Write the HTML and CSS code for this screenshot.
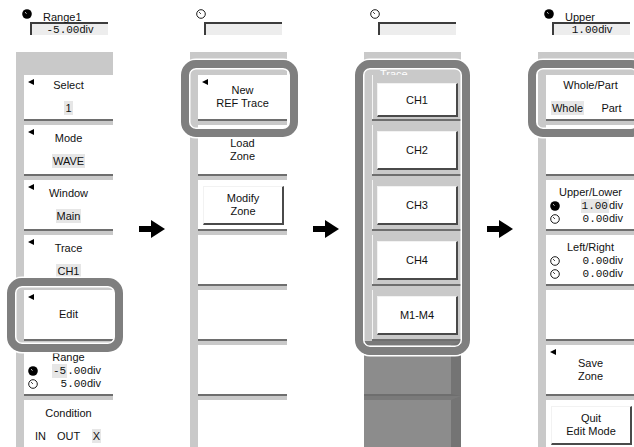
FILE: index.html
```html
<!DOCTYPE html>
<html lang="en">
<head>
  <meta charset="UTF-8">
  <meta name="viewport" content="width=device-width, initial-scale=1.0">
  <title>REF Trace zone edit</title>
  <link rel="stylesheet" href="styles.css">
</head>
<body>
  <div class="page">

    <!-- step 1 -->
    <div class="col">
      <div class="head">
        <div class="head-top">
          <svg class="knob" viewBox="0 0 10 10"><circle cx="5" cy="5" r="4.8" fill="#000"/><path d="M3 3.2 L4.6 4.6" stroke="#fff" stroke-width="0.8"/></svg>
          <span class="head-label">Range1</span>
        </div>
        <div class="head-box"><span class="num">-5.00</span>div</div>
      </div>
      <div class="menu">
        <div class="band"></div>
        <div class="key first">
          <span class="tri"></span>
          <div class="name">Select</div>
          <div class="val"><span class="sel">1</span></div>
        </div>
        <div class="key">
          <span class="tri"></span>
          <div class="name">Mode</div>
          <div class="val"><span class="sel">WAVE</span></div>
        </div>
        <div class="key">
          <span class="tri"></span>
          <div class="name">Window</div>
          <div class="val"><span class="sel">Main</span></div>
        </div>
        <div class="key">
          <span class="tri"></span>
          <div class="name">Trace</div>
          <div class="val"><span class="sel">CH1</span></div>
        </div>
        <div class="key single">
          <span class="tri"></span>
          <div class="name">Edit</div>
        </div>
        <div class="key">
          <div class="title">Range</div>
          <div class="row">
            <svg class="knob" viewBox="0 0 10 10"><circle cx="5" cy="5" r="4.8" fill="#000"/><path d="M3 3.2 L4.6 4.6" stroke="#fff" stroke-width="0.8"/></svg>
            <span class="amount"><span class="num"><span class="sel">-5</span>.00</span>div</span>
          </div>
          <div class="row">
            <svg class="knob" viewBox="0 0 10 10"><circle cx="5" cy="5" r="4.3" fill="#fff" stroke="#000" stroke-width="0.9"/><path d="M3.2 3.2 L4.8 4.8" stroke="#000" stroke-width="0.9"/></svg>
            <span class="amount"><span class="num">5.00</span>div</span>
          </div>
        </div>
        <div class="key">
          <div class="name">Condition</div>
          <div class="choice three">
            <span>IN</span><span>OUT</span><span><span class="sel">X</span></span>
          </div>
        </div>
      </div>
    </div>

    <div class="arrow"><svg viewBox="0 0 26 18"><rect x="0" y="6" width="14" height="6" fill="#000"/><polygon points="12,0 26,9 12,18" fill="#000"/></svg></div>

    <!-- step 2 -->
    <div class="col">
      <div class="head">
        <div class="head-top">
          <svg class="knob" viewBox="0 0 10 10"><circle cx="5" cy="5" r="4.3" fill="#fff" stroke="#000" stroke-width="0.9"/><path d="M3.2 3.2 L4.8 4.8" stroke="#000" stroke-width="0.9"/></svg>
          <span class="head-label"></span>
        </div>
        <div class="head-box"></div>
      </div>
      <div class="menu">
        <div class="band"></div>
        <div class="key first double">
          <span class="tri"></span>
          <div class="name">New</div>
          <div class="name">REF Trace</div>
        </div>
        <div class="key double">
          <div class="name">Load</div>
          <div class="name">Zone</div>
        </div>
        <div class="key pad">
          <div class="btn double">
            <div class="name">Modify</div>
            <div class="name">Zone</div>
          </div>
        </div>
        <div class="key"></div>
        <div class="key"></div>
        <div class="key"></div>
        <div class="key"></div>
      </div>
    </div>

    <div class="arrow"><svg viewBox="0 0 26 18"><rect x="0" y="6" width="14" height="6" fill="#000"/><polygon points="12,0 26,9 12,18" fill="#000"/></svg></div>

    <!-- step 3 -->
    <div class="col">
      <div class="head">
        <div class="head-top">
          <svg class="knob" viewBox="0 0 10 10"><circle cx="5" cy="5" r="4.3" fill="#fff" stroke="#000" stroke-width="0.9"/><path d="M3.2 3.2 L4.8 4.8" stroke="#000" stroke-width="0.9"/></svg>
          <span class="head-label"></span>
        </div>
        <div class="head-box"></div>
      </div>
      <div class="menu gray">
        <div class="band"><span class="legend">Trace</span></div>
        <div class="key first pad"><div class="btn">CH1</div></div>
        <div class="key pad"><div class="btn">CH2</div></div>
        <div class="key pad"><div class="btn">CH3</div></div>
        <div class="key pad"><div class="btn">CH4</div></div>
        <div class="key pad"><div class="btn">M1-M4</div></div>
        <div class="key off"></div>
        <div class="key off"></div>
      </div>
    </div>

    <div class="arrow"><svg viewBox="0 0 26 18"><rect x="0" y="6" width="14" height="6" fill="#000"/><polygon points="12,0 26,9 12,18" fill="#000"/></svg></div>

    <!-- step 4 -->
    <div class="col">
      <div class="head">
        <div class="head-top">
          <svg class="knob" viewBox="0 0 10 10"><circle cx="5" cy="5" r="4.8" fill="#000"/><path d="M3 3.2 L4.6 4.6" stroke="#fff" stroke-width="0.8"/></svg>
          <span class="head-label">Upper</span>
        </div>
        <div class="head-box"><span class="num">1.00</span>div</div>
      </div>
      <div class="menu">
        <div class="band"></div>
        <div class="key first">
          <div class="name">Whole/Part</div>
          <div class="choice two">
            <span><span class="sel">Whole</span></span><span>Part</span>
          </div>
        </div>
        <div class="key"></div>
        <div class="key">
          <div class="title">Upper/Lower</div>
          <div class="row">
            <svg class="knob" viewBox="0 0 10 10"><circle cx="5" cy="5" r="4.8" fill="#000"/><path d="M3 3.2 L4.6 4.6" stroke="#fff" stroke-width="0.8"/></svg>
            <span class="amount"><span class="num"><span class="sel">1.00</span></span>div</span>
          </div>
          <div class="row">
            <svg class="knob" viewBox="0 0 10 10"><circle cx="5" cy="5" r="4.3" fill="#fff" stroke="#000" stroke-width="0.9"/><path d="M3.2 3.2 L4.8 4.8" stroke="#000" stroke-width="0.9"/></svg>
            <span class="amount"><span class="num">0.00</span>div</span>
          </div>
        </div>
        <div class="key">
          <div class="title">Left/Right</div>
          <div class="row">
            <svg class="knob" viewBox="0 0 10 10"><circle cx="5" cy="5" r="4.3" fill="#fff" stroke="#000" stroke-width="0.9"/><path d="M3.2 3.2 L4.8 4.8" stroke="#000" stroke-width="0.9"/></svg>
            <span class="amount"><span class="num">0.00</span>div</span>
          </div>
          <div class="row">
            <svg class="knob" viewBox="0 0 10 10"><circle cx="5" cy="5" r="4.3" fill="#fff" stroke="#000" stroke-width="0.9"/><path d="M3.2 3.2 L4.8 4.8" stroke="#000" stroke-width="0.9"/></svg>
            <span class="amount"><span class="num">0.00</span>div</span>
          </div>
        </div>
        <div class="key"></div>
        <div class="key double">
          <span class="tri"></span>
          <div class="name">Save</div>
          <div class="name">Zone</div>
        </div>
        <div class="key pad">
          <div class="btn double">
            <div class="name">Quit</div>
            <div class="name">Edit Mode</div>
          </div>
        </div>
      </div>
    </div>

    <!-- callout rings -->
    <div class="ring r1"></div>
    <div class="ring r2"></div>
    <div class="ring r3"></div>
    <div class="ring r4"></div>
  </div>
</body>
</html>
```

FILE: styles.css
```css
body {
  margin: 0;
  padding: 0;
  background: #fff;
  font-family: "Liberation Sans", Arial, sans-serif;
  font-size: 11px;
  color: #111;
  overflow: hidden;
}
.page {
  position: relative;
  display: flex;
  align-items: flex-start;
  padding-left: 16px;
  width: 634px;
  height: 447px;
  box-sizing: border-box;
  overflow: hidden;
}
.col {
  width: 97px;
  flex: none;
}
.arrow {
  width: 77px;
  flex: none;
  display: flex;
  justify-content: center;
  padding-top: 220px;
}
.arrow svg {
  width: 26px;
  height: 18px;
}

/* header with jog knob and value box */
.head {
  height: 52px;
  padding: 9px 0 0 6px;
  box-sizing: border-box;
}
.head-top {
  display: flex;
  align-items: flex-start;
  height: 13px;
}
.knob {
  width: 10px;
  height: 10px;
  flex: none;
}
.head-label {
  margin: 3px 0 0 11px;
  line-height: 10px;
}
.head-box {
  margin-left: 8px;
  width: 78px;
  height: 13px;
  box-sizing: border-box;
  border-top: 2px solid #3c3c3c;
  border-left: 2px solid #3c3c3c;
  background: #ededed;
  text-align: center;
  line-height: 11px;
}
.num {
  font-family: "Liberation Mono", monospace;
  font-size: 11px;
}

/* soft key menu */
.menu {
  border-left: 8px solid #c9c9c9;
}
.band {
  height: 23px;
  margin-left: -8px;
  background: #c9c9c9;
}
.key {
  position: relative;
  height: 49px;
  background: #fff;
  border-bottom: 2px solid #6e6e6e;
  display: flex;
  flex-direction: column;
  justify-content: center;
  align-items: center;
  text-align: center;
}
.key + .key {
  border-top: 4px solid #c9c9c9;
}
.key.first {
  height: 44px;
}
.key:last-child {
  border-bottom: none;
}
.tri {
  position: absolute;
  left: 4px;
  top: 4px;
  width: 0;
  height: 0;
  border-top: 3.5px solid transparent;
  border-bottom: 3.5px solid transparent;
  border-right: 6px solid #000;
}
.name {
  line-height: 13px;
}
.val {
  line-height: 13px;
  margin-top: 10px;
}
.sel {
  background: #e6e6e6;
  padding: 1px 1px;
}
.title {
  line-height: 13px;
  margin-top: 2px;
}
.row {
  display: flex;
  align-items: center;
  justify-content: space-between;
  width: 100%;
  box-sizing: border-box;
  padding: 0 12px 0 4px;
  height: 13px;
}
.choice {
  display: grid;
  margin-top: 10px;
  line-height: 13px;
}
.choice.three {
  grid-template-columns: 28px 28px 28px;
}
.choice.two {
  grid-template-columns: 44px 44px;
  margin-right: 2px;
}

/* raised buttons */
.key.pad {
  height: 43px;
  justify-content: flex-start;
  align-items: stretch;
  padding: 6px 3px 0 5px;
}
.btn {
  height: 36px;
  background: #fff;
  border-top: 1px solid #f2f2f2;
  border-left: 1px solid #f2f2f2;
  border-right: 2px solid #4a4a4a;
  border-bottom: 2px solid #4a4a4a;
  display: flex;
  flex-direction: column;
  justify-content: center;
  align-items: center;
}

/* step 3: trace group */
.menu.gray .band,
.menu.gray .key {
  background: #c9c9c9;
}
.menu.gray .key.pad {
  box-shadow: inset 1px 0 0 #f4f4f4;
}
.legend {
  display: inline-block;
  margin: 17px 0 0 14px;
  padding: 0 2px;
  color: #fff;
  line-height: 11px;
}
.menu.gray .key.first {
  height: 36px;
  padding-top: 8px;
}
.menu.gray .key.first .btn {
  height: 31px;
}
.menu.gray .key.off {
  margin-left: -8px;
  background: #8c8c8c;
  border-top-color: #7a7a7a;
  border-right: 10px solid #747474;
  box-shadow: none;
}

/* callout rings */
.ring {
  position: absolute;
  box-sizing: border-box;
  border: 8px solid #7f7f7f;
  border-radius: 15px;
  box-shadow: 0 0 0 1.5px #fff, inset 0 0 0 1.5px #fff;
}
.r1 { left: 7px;   top: 278px; width: 116px; height: 74px; }
.r2 { left: 181px; top: 60px;  width: 117px; height: 77px; }
.r3 { left: 355px; top: 60px;  width: 115px; height: 295px; }
.r4 { left: 528px; top: 60px;  width: 118px; height: 77px; }
```
